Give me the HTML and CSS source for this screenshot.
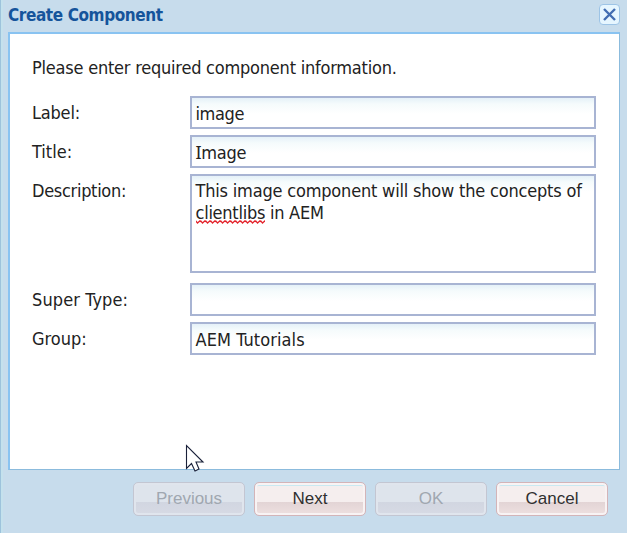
FILE: index.html
```html
<!DOCTYPE html>
<html lang="en">
<head>
<meta charset="utf-8">
<title>Create Component</title>
<link rel="stylesheet" href="styles.css">
</head>
<body>
<main class="dialog">
  <header class="titlebar">
    <h1 class="title">Create Component</h1>
    <button class="close" aria-label="Close"><svg width="15" height="15" viewBox="0 0 15 15"><path d="M2 2L13 13M13 2L2 13" stroke="#426db2" stroke-width="2.4"/></svg></button>
  </header>
  <section class="panel">
    <p class="intro">Please enter required component information.</p>
    <div class="form">
      <span class="label l1">Label:</span><div class="field"><span class="v1">image</span></div>
      <span class="label l2">Title:</span><div class="field"><span class="v2"><span class="serif-cap">I</span>mage</span></div>
      <span class="label l3">Description:</span><div class="field area"><span class="v3">This image component will show the concepts of</span><br><span class="v4"><span class="misspelled">clientlibs<svg class="squiggle" width="69" height="4" viewBox="0 0 69 4"><defs><pattern id="wave" width="5" height="4" patternUnits="userSpaceOnUse"><path d="M-1 .2L1.5 3L4 .8L6.5 3" fill="none" stroke="#e3222b" stroke-width="1.3"/></pattern></defs><rect width="69" height="4" fill="url(#wave)"/></svg></span> in AEM</span></div>
      <span class="label l4">Super Type:</span><div class="field"></div>
      <span class="label l5">Group:</span><div class="field"><span class="v5">AEM Tutorials</span></div>
    </div>
  </section>
  <footer class="actions">
    <button class="btn" disabled>Previous</button>
    <button class="btn">Next</button>
    <button class="btn" disabled>OK</button>
    <button class="btn">Cancel</button>
  </footer>
  <svg class="cursor" width="20" height="30" viewBox="0 0 20 30"><path d="M1.5 1.5V24.5L6.5 19.5L10 27L14 25L11 18H18Z" fill="#fff" stroke="#192039" stroke-width="1.1"/></svg>
</main>
</body>
</html>
```

FILE: styles.css
```css
* { box-sizing: border-box; }
body { margin: 0; font-family: "DejaVu Sans Condensed", "Noto Sans", sans-serif; font-size: 18px; color: #222; }
.dialog { position: relative; width: 627px; height: 533px; display: flex; flex-direction: column; padding: 0 7px 0 8px; background: #c7dcec; box-shadow: inset 1px 0 #9dc3dc, inset 3px 0 #c4e1ed; overflow: hidden; }
.titlebar { height: 32px; display: flex; justify-content: space-between; padding-top: 4px; }
.title { margin: 0; font-size: 17px; line-height: 22px; font-weight: 700; color: #15549b; letter-spacing: -.4px; white-space: nowrap; }
.close { width: 21px; height: 21px; padding: 0; border: 1px solid #9dc4e6; border-radius: 4px; background: #e6f6ff; display: flex; align-items: center; justify-content: center; }
.panel { height: 438px; border: 1px solid #8bbbdd; border-left: 2px solid #89c3f1; border-top: 2px solid #89c3f1; background: #fff; padding: 22px 23px 0 22px; }
.intro { margin: 0 0 17px; line-height: 23px; white-space: nowrap; letter-spacing: -.22px; }
.form { display: grid; grid-template-columns: 158px 406px; row-gap: 6px; grid-template-rows: 33px 33px 99px 33px 33px; }
.form > :nth-child(n+7) { position: relative; top: 4px; }
.label { line-height: 33px; white-space: nowrap; }
.l1 { letter-spacing: -.2px; }
.l3 { letter-spacing: -.3px; }
.l4 { letter-spacing: .1px; }
.field { border: 2px solid #a8b4d3; background: linear-gradient(#e5f1f8, #f5fbfc 6px, #fff 16px); padding: 3px 0 0 3.5px; line-height: 26px; white-space: nowrap; }
.area { padding-top: 4px; line-height: 22px; }
.v1 { letter-spacing: -.4px; }
.v2 { letter-spacing: -.3px; }
.v3 { letter-spacing: -.19px; }
.v4 { letter-spacing: -.26px; }
.v5 { letter-spacing: .08px; }
.serif-cap { font-family: "Noto Sans", sans-serif; line-height: 1; }
.misspelled { position: relative; }
.squiggle { position: absolute; left: 0; bottom: -1px; }
.actions { display: flex; justify-content: flex-end; gap: 9px; padding: 12px 12px 0 0; }
.btn { width: 112px; height: 34px; padding: 0 0 1px; border: 1px solid #d3b4b8; border-radius: 5px; font: 17px "Liberation Sans", sans-serif; color: #303030; background: linear-gradient(#f5eeee 0 58%, #e2d4d5 59%, #eee0e0 100%); box-shadow: inset 0 0 0 2px #f8f3f4, inset 0 3px #c9e9f1; }
.btn:disabled { color: #a0a7b0; border-color: #c3c6d2; background: linear-gradient(#dee4ec 0 58%, #d1d6e1 59%, #d7dae4 100%); box-shadow: inset 0 0 0 2px #e0e5ed; }
.cursor { position: absolute; left: 185px; top: 444px; }
```
